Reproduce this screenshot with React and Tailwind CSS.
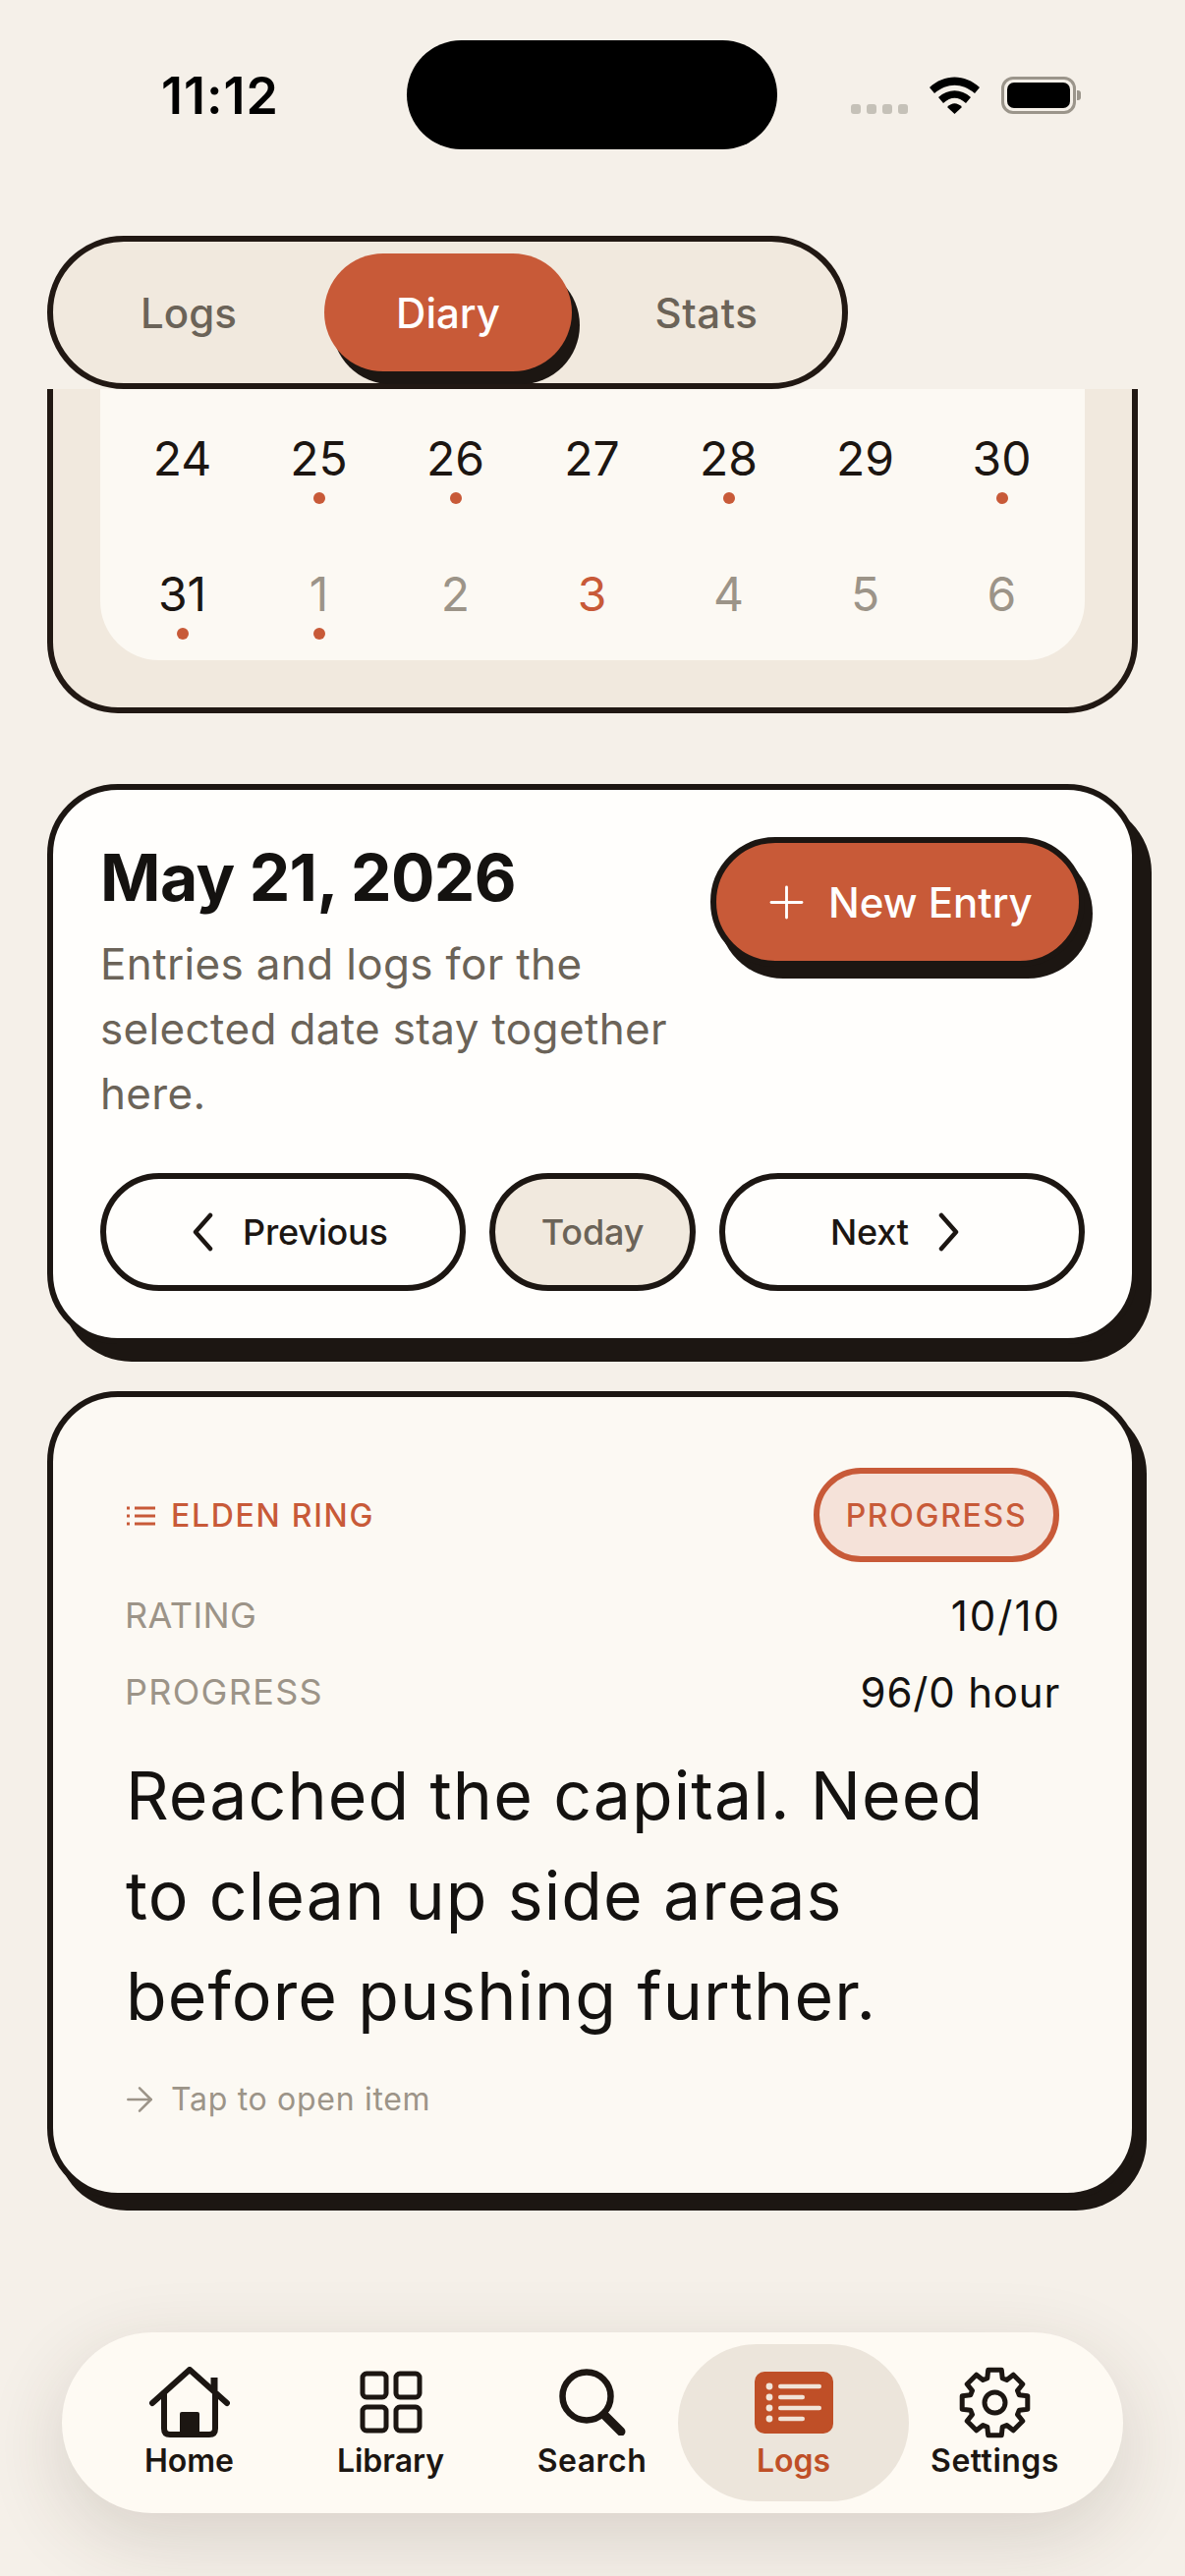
import { Plus, ArrowRight } from 'lucide-react';

const calendarRows = [
  [
    { day: 24 },
    { day: 25, dot: true },
    { day: 26, dot: true },
    { day: 27 },
    { day: 28, dot: true },
    { day: 29 },
    { day: 30, dot: true },
  ],
  [
    { day: 31, dot: true },
    { day: 1, dot: true, muted: true },
    { day: 2, muted: true },
    { day: 3, accent: true },
    { day: 4, muted: true },
    { day: 5, muted: true },
    { day: 6, muted: true },
  ],
];

// 8 tooth gear outline, radii in px of the 73px icon
const gearPoints = (() => {
  const pts = [];
  for (let i = 0; i < 8; i++) {
    const a = (i * Math.PI) / 4 - Math.PI / 2;
    const step = 0.2;
    const p = (r, t) => `${(36.5 + r * Math.cos(t)).toFixed(1)},${(36.5 + r * Math.sin(t)).toFixed(1)}`;
    pts.push(p(26, a - 0.3), p(34, a - step), p(34, a + step), p(26, a + 0.3));
  }
  return pts.join(' ');
})();

const HomeIcon = () => (
  <svg width="82" height="72" viewBox="0 0 82 72" fill="none" stroke="#1c1612" strokeWidth="6" strokeLinecap="round" strokeLinejoin="round">
    <path d="M3 37 L41 3 L79 37" />
    <path d="M15 27 V63 Q15 69 21 69 H61 Q67 69 67 63 V27" />
    <path d="M66 24 V11" strokeWidth="7" strokeLinecap="butt" />
    <rect x="31" y="46" width="20" height="23" rx="2" fill="#1c1612" stroke="none" />
  </svg>
);

const LibraryIcon = () => (
  <svg width="64" height="64" viewBox="0 0 64 64" fill="none" stroke="#1c1612" strokeWidth="5">
    <rect x="3" y="3" width="24" height="24" rx="4" />
    <rect x="37" y="3" width="24" height="24" rx="4" />
    <rect x="3" y="37" width="24" height="24" rx="4" />
    <rect x="37" y="37" width="24" height="24" rx="4" />
  </svg>
);

const SearchIcon = () => (
  <svg width="68" height="68" viewBox="0 0 68 68" fill="none" stroke="#1c1612" strokeLinecap="round">
    <circle cx="28" cy="28" r="24.5" strokeWidth="6.5" />
    <path d="M46 47 L63 64" strokeWidth="9" />
  </svg>
);

const LogsIcon = () => (
  <svg width="80" height="63" viewBox="0 0 80 63">
    <rect width="80" height="63" rx="10" fill="#bf4f27" />
    {[15, 26, 37, 48].map((y, i) => (
      <g key={y} fill="#f1e4d8">
        <circle cx="15" cy={y} r="3.4" />
        <rect x="24" y={y - 2.2} width={i % 2 === 0 ? 44 : 27} height="4.4" rx="2.2" />
      </g>
    ))}
  </svg>
);

const SettingsIcon = () => (
  <svg width="73" height="73" viewBox="0 0 73 73" fill="none" stroke="#1c1612" strokeWidth="5" strokeLinejoin="round">
    <polygon points={gearPoints} />
    <circle cx="36.5" cy="36.5" r="10.5" />
  </svg>
);

const ChevronBack = () => (
  <svg width="24" height="40" viewBox="0 0 24 40" fill="none" stroke="#1c1612" strokeWidth="4.5" strokeLinecap="round" strokeLinejoin="round">
    <path d="M20 3 L5 20 L20 37" />
  </svg>
);

const ChevronNext = () => (
  <svg width="24" height="40" viewBox="0 0 24 40" fill="none" stroke="#1c1612" strokeWidth="4.5" strokeLinecap="round" strokeLinejoin="round">
    <path d="M4 3 L19 20 L4 37" />
  </svg>
);

const navItems = [
  { label: 'Home', icon: <HomeIcon />, tracking: 'tracking-[0px]' },
  { label: 'Library', icon: <LibraryIcon />, tracking: 'tracking-[0px]' },
  { label: 'Search', icon: <SearchIcon />, tracking: 'tracking-[0.5px]' },
  { label: 'Logs', icon: <LogsIcon />, tracking: 'tracking-[0px]', active: true },
  { label: 'Settings', icon: <SettingsIcon />, tracking: 'tracking-[0.5px]' },
];

const StatusBar = () => (
  <div className="relative h-[240px] shrink-0">
    <div className="absolute left-[414px] top-[41px] h-[111px] w-[377px] rounded-[56px] bg-black" />
    <div className="flex items-start justify-between pl-[164px] pr-[106px] pt-[69px]">
      <span className="text-[52px] font-semibold leading-[58px] tracking-[1px] text-black">11:12</span>
      <div className="flex items-end pt-[9px]">
        <div className="flex gap-[6px]">
          <span className="h-[10px] w-[10px] rounded-[3px] bg-[#c5c1b8]" />
          <span className="h-[10px] w-[10px] rounded-[3px] bg-[#c5c1b8]" />
          <span className="h-[10px] w-[10px] rounded-[3px] bg-[#c5c1b8]" />
          <span className="h-[10px] w-[10px] rounded-[3px] bg-[#c5c1b8]" />
        </div>
        <svg className="ml-[22px]" width="51" height="38" viewBox="0 0 51 38">
          <path d="M0 11 C15 -3 36 -3 51 11 L46 17 C33 6 18 6 5 17 Z" />
          <path d="M9 21 C19 12 32 12 42 21 L37 27 C29 20 22 20 14 27 Z" />
          <path d="M18 31 C23 26 28 26 33 31 L25.5 38 Z" />
        </svg>
        <div className="ml-[22px] flex items-center">
          <div className="h-[38px] w-[76px] rounded-[12px] border-[3px] border-[#9b958b] p-[3px]">
            <div className="h-full w-full rounded-[7px] bg-black" />
          </div>
          <div className="ml-[1px] h-[10px] w-[4px] rounded-r-[3px] bg-[#9b958b]" />
        </div>
      </div>
    </div>
  </div>
);

const Tabs = () => (
  <div className="ml-[48px] flex h-[156px] w-[815px] shrink-0 items-center rounded-[78px] border-[6px] border-[#211813] bg-[#f1e9de] pl-[12px] text-[42px] font-medium">
    <div className="w-[264px] pr-[12px] text-center text-[#6b6358]">Logs</div>
    <div className="flex h-[120px] w-[252px] items-center justify-center rounded-[60px] bg-[#c85a38] text-white shadow-[8px_13px_0_#1c1612]">Diary</div>
    <div className="w-[274px] text-center tracking-[0.6px] text-[#6b6358]">Stats</div>
  </div>
);

const Calendar = () => (
  <div className="ml-[48px] w-[1110px] rounded-b-[72px] border-x-[6px] border-b-[6px] border-[#211813] bg-[#f1e9de] px-[48px] pb-[48px]">
    <div className="flex flex-col gap-[16px] rounded-b-[60px] bg-[#fcf9f3] pb-0 pl-[14px] pr-[15px] pt-[16px]">
      {calendarRows.map((row, i) => (
        <div key={i} className="grid h-[122px] grid-cols-7">
          {row.map((cell) => (
            <div key={cell.day} className="flex flex-col items-center pt-[29px]">
              <span
                className={`text-[48px] leading-[52px] ${
                  cell.accent ? 'text-[#c85a38]' : cell.muted ? 'text-[#9c9488]' : 'text-[#1c1612]'
                }`}
              >
                {cell.day}
              </span>
              {cell.dot && <span className="mt-[8px] h-[12px] w-[12px] rounded-full bg-[#c85a38]" />}
            </div>
          ))}
        </div>
      ))}
    </div>
  </div>
);

const DateCard = () => (
  <div className="ml-[48px] mt-[72px] h-[570px] w-[1110px] rounded-[72px] border-[6px] border-[#1c1612] bg-[#fffefc] px-[48px] pt-[51px] shadow-[14px_18px_0_#1c1612]">
    <div className="flex items-start justify-between">
      <div className="w-[600px]">
        <h2 className="text-[66px] font-bold leading-[76px] tracking-[-0.6px] text-[#141210]">May 21, 2026</h2>
        <p className="mt-[17px] text-[44px] leading-[66px] tracking-[0.35px] text-[#6b6358]">Entries and logs for the selected date stay together here.</p>
      </div>
      <button className="-mt-[3px] flex h-[132px] w-[381px] items-center justify-start gap-[16px] rounded-[66px] border-[6px] border-[#1c1612] bg-[#c85a38] pl-[45px] text-[42px] font-medium text-white shadow-[8px_12px_0_#1c1612]">
        <Plus size={53} strokeWidth={1.3} />
        New Entry
      </button>
    </div>
    <div className="mt-[48px] flex gap-[24px] text-[36px] font-medium tracking-[-0.2px] text-[#1c1612]">
      <button className="flex h-[120px] w-[372px] items-center gap-[29px] rounded-[60px] border-[6px] border-[#1c1612] pl-[86px]">
        <ChevronBack />
        Previous
      </button>
      <button className="flex h-[120px] w-[210px] items-center justify-center rounded-[60px] border-[6px] border-[#1c1612] bg-[#f1e9de] text-[#6b6358]">Today</button>
      <button className="flex h-[120px] w-[372px] items-center gap-[29px] rounded-[60px] border-[6px] border-[#1c1612] pl-[107px]">
        Next
        <ChevronNext />
      </button>
    </div>
  </div>
);

const EntryCard = () => (
  <div className="ml-[48px] mt-[48px] h-[822px] w-[1110px] rounded-[72px] border-[6px] border-[#1c1612] bg-[#fcf9f3] pl-[74px] pr-[74px] pt-[72px] shadow-[9px_12px_0_#1c1612]">
    <div className="flex items-center justify-between">
      <div className="flex items-center gap-[16px] pt-[2px] text-[32px] font-medium tracking-[1.7px] text-[#c85a38]">
        <svg width="30" height="24" viewBox="0 0 30 24" fill="none" stroke="#c85a38" strokeWidth="3">
          <path d="M9 4 H30 M9 12 H30 M9 20 H30" />
          <path d="M1 4 H4 M1 12 H4 M1 20 H4" />
        </svg>
        ELDEN RING
      </div>
      <div className="flex h-[96px] w-[250px] items-center justify-center rounded-[48px] border-[6px] border-[#c85a38] bg-[#f5e2d9] pt-[2px] text-[32px] font-medium tracking-[1.7px] text-[#c85a38]">PROGRESS</div>
    </div>
    <div className="mt-[29px] flex h-[50px] items-center justify-between">
      <span className="-ml-[1px] text-[36px] tracking-[0.4px] text-[#9c9488]">RATING</span>
      <span className="-mr-[2px] text-[42px] tracking-[2px] text-[#141210]">10/10</span>
    </div>
    <div className="mt-[28px] flex h-[50px] items-center justify-between">
      <span className="-ml-[1px] text-[36px] tracking-[1.3px] text-[#9c9488]">PROGRESS</span>
      <span className="-mr-[1px] text-[42px] tracking-[0.8px] text-[#141210]">96/0 hour</span>
    </div>
    <p className="mt-[29px] w-[930px] text-[68px] leading-[102px] tracking-[1.1px] text-[#141210]">Reached the capital. Need to clean up side areas before pushing further.</p>
    <div className="mt-[31px] flex items-center gap-[12px] text-[32px] tracking-[0.7px] text-[#9c9488]">
      <ArrowRight className="-ml-[6px]" size={40} strokeWidth={1.5} />
      Tap to open item
    </div>
  </div>
);

const BottomNav = () => (
  <nav className="absolute left-[63px] top-[2374px] h-[184px] w-[1080px] rounded-[92px] bg-[#fefaf3] py-[12px] pl-[27px] shadow-[0_24px_80px_rgba(60,45,30,0.16)]">
    <div className="grid h-[160px] w-[1025px] grid-cols-5">
      {navItems.map((item) => (
        <div
          key={item.label}
          className={`flex flex-col items-center ${item.active ? '-mx-[15px] rounded-[80px] bg-[#ece5db]' : ''}`}
        >
          <div className="flex h-[93px] items-center pt-[25px]">{item.icon}</div>
          <span className={`mt-[4px] text-[32px] font-semibold leading-[44px] ${item.tracking} ${item.active ? 'text-[#bf4f27]' : 'text-[#1c1612]'}`}>
            {item.label}
          </span>
        </div>
      ))}
    </div>
  </nav>
);

export default function App() {
  return (
    <div className="relative flex h-[2622px] w-[1206px] flex-col overflow-hidden bg-[#f5f0e9] font-[Inter,sans-serif]">
      <StatusBar />
      <Tabs />
      <Calendar />
      <DateCard />
      <EntryCard />
      <BottomNav />
    </div>
  );
}
